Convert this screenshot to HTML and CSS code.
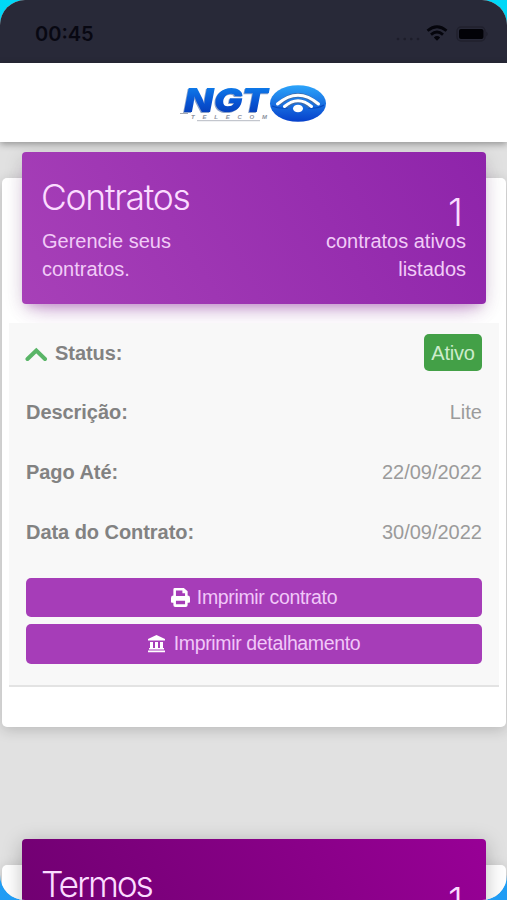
FILE: index.html
```html
<!DOCTYPE html>
<html lang="pt-BR">
<head>
<meta charset="utf-8">
<title>Contratos</title>
<link rel="stylesheet" href="styles.css">
</head>
<body>
<div class="screen">
  <div class="statusbar">
    <span class="time">00:45</span>
    <div class="indicators">
      <svg class="cellular" width="24" height="6" viewBox="0 0 24 6"><g fill="#1d1d2a"><circle cx="2" cy="3" r="1.3"/><circle cx="8.700" cy="3" r="1.3"/><circle cx="15.300" cy="3" r="1.3"/><circle cx="22" cy="3" r="1.3"/></g></svg>
      <svg class="wifi" width="22" height="16" viewBox="0 0 22 16"><g fill="none" stroke="#05050c" stroke-width="2.8"><path d="M1.500 5.800Q11-2.400 20.500 5.800"/><path d="M5 9.600Q11 4.400 17 9.600"/></g><path d="M7.800 12.400Q11 9.600 14.200 12.400L11 15.700Z" fill="#05050c"/></svg>
      <svg class="battery" width="33" height="16" viewBox="0 0 33 16"><rect x="1" y="1" width="28" height="14" rx="4" fill="none" stroke="#20202d" stroke-width="1.4"/><rect x="3" y="3" width="24.500" height="10" rx="2" fill="#020207"/><path d="M30.500 5.500q2 2.500 0 5z" fill="#1b1b27"/></svg>
    </div>
  </div>
  <header class="topbar">
    <svg class="logo" width="150" height="44" viewBox="0 0 150 44">
      <defs>
        <linearGradient id="blue" x1="0" y1="0" x2="0" y2="1"><stop offset="0" stop-color="#128df4"/><stop offset=".55" stop-color="#0754d3"/><stop offset="1" stop-color="#0632ac"/></linearGradient>
        <linearGradient id="disc" x1="0" y1="0" x2="0" y2="1"><stop offset="0" stop-color="#2ca4fa"/><stop offset="1" stop-color="#0640cb"/></linearGradient>
      </defs>
      <text class="logo-name" x="5" y="32" textLength="84" lengthAdjust="spacingAndGlyphs">NGT</text>
      <path d="M1 33.500H9" stroke="#a5a9b2" stroke-width="1"/>
      <text class="logo-sub" x="12" y="39" textLength="76" lengthAdjust="spacing">TELECOM</text>
      <path d="M18 40.700H81" stroke="#b5b9c2" stroke-width="1"/>
      <ellipse cx="119" cy="23.500" rx="28" ry="18.300" fill="url(#disc)"/>
      <path d="M93 26Q100 29 109 28M129 28Q139 29 145 25" stroke="#0749bd" stroke-width="1.200" fill="none"/>
      <g fill="none" stroke="#416ba5" stroke-width="4.200"><path d="M99.500 24Q119 6.500 138.500 24"/><path d="M107 26.800Q119 15.500 131 26.800"/></g>
      <g fill="none" stroke="#fff" stroke-linecap="round" stroke-width="3"><path d="M98.500 24Q119 6.500 139.500 24"/><path d="M105.500 26.500Q119 15 132.500 26.500"/></g>
      <ellipse cx="119" cy="28.500" rx="5" ry="3.800" fill="#fff"/>
    </svg>
  </header>
  <main class="content">
    <section class="card">
      <div class="card-header contracts">
        <h2 class="title">Contratos</h2>
        <div class="summary">
          <p class="description">Gerencie seus<br>contratos.</p>
          <p class="count"><span class="number">1</span><span class="label">contratos ativos</span><span class="label listed">listados</span></p>
        </div>
      </div>
      <div class="details">
        <div class="row"><span class="name"><svg class="chevron" width="24" height="16" viewBox="0 0 24 16"><path d="M2.500 13L11.300 4.500L20 13" fill="none" stroke="#59b567" stroke-width="4" stroke-linecap="round"/></svg><span class="status-label">Status:</span></span><span class="badge">Ativo</span></div>
        <div class="row"><span class="name">Descrição:</span><span class="value">Lite</span></div>
        <div class="row"><span class="name">Pago Até:</span><span class="value">22/09/2022</span></div>
        <div class="row"><span class="name">Data do Contrato:</span><span class="value">30/09/2022</span></div>
        <div class="actions">
          <button class="button"><svg width="19" height="19" viewBox="0 0 20 20"><path fill="#fff" fill-rule="evenodd" d="M4 0H13.500L17.500 3.500V8H17.500Q20 8 20 10.500V14.500Q20 15.500 19 15.500H17.500V18Q17.500 20 15.500 20H4.500Q2.500 20 2.500 18V15.500H1Q0 15.500 0 14.500V10.500Q0 8 2.500 8V1.500Q2.500 0 4 0ZM5.200 2.700V8.500H14.800V5.500H12V2.700ZM5.200 13.500V17.200H14.800V13.500Z"/></svg><span class="contract-text">Imprimir contrato</span></button>
          <button class="button"><svg width="17" height="18" viewBox="0 0 17 18"><path fill="#fff" d="M8.500 0L17 4V5.500H0V4ZM2 7H5V13H2ZM7 7H10V13H7ZM12 7H15V13H12ZM1 13H16V14.500H1ZM0 15.500H17V17.300H0Z"/></svg><span class="detail-text">Imprimir detalhamento</span></button>
        </div>
      </div>
    </section>
    <section class="card terms-card">
      <div class="card-header terms">
        <h2 class="title">Termos</h2>
        <p class="count"><span class="number">1</span></p>
      </div>
    </section>
  </main>
</div>
</body>
</html>
```
FILE: styles.css
```css
* { box-sizing: border-box; }
body { margin: 0; background: linear-gradient(#00d8f7, #209cf4); }
.screen { width: 507px; height: 900px; overflow: hidden; border-radius: 25px; background: #e1e1e1; font-family: "Liberation Sans", Arial, sans-serif; }
.statusbar { height: 63px; padding: 5px 21px 0 35px; display: flex; align-items: center; justify-content: space-between; background: #282938; }
.time { font: 600 20px Inter, sans-serif; color: #080812; }
.indicators { display: flex; align-items: center; }
.cellular { margin: 10px 6px 0 0; }
.wifi { margin: -2px 8px 0 0; }
.battery { margin: -1px -3px 0 0; }
.topbar { position: relative; height: 79px; display: flex; justify-content: center; padding-top: 17px; background: #fff; box-shadow: 0 2px 7px #0000005c; }
.logo-name { font: italic 900 33px Inter, "Liberation Sans", sans-serif; fill: url(#blue); filter: drop-shadow(-1px 1px .5px #8ea3c9); }
.logo-sub { font: italic 700 6px "Liberation Sans", sans-serif; fill: #8d929f; }
.content { padding: 36px 1px 0 2px; }
.card { height: 549px; border-radius: 5px; background: #fff; box-shadow: 0 3px 14px #0000002e; padding: 0 7px; display: flow-root; }
.card-header { height: 152px; margin: -26px 13px 0 13px; border-radius: 4px; padding: 23px 20px 0; color: #f1cbf7; }
.contracts { background: linear-gradient(60deg, #a740b8, #8e24aa); box-shadow: 0 12px 20px -10px #9c27b070, 0 4px 20px #0000001f, 0 7px 8px -5px #9c27b033; }
.title { margin: 0 0 0 -1px; font: 300 35.5px/45px Inter, sans-serif; letter-spacing: -1.3px; color: #fbdcff; }
.summary { display: flex; justify-content: space-between; }
.description { margin: 7px 0 0; font-size: 20px; line-height: 28px; }
.count { margin: -23px 0 0; display: flex; flex-direction: column; align-items: flex-end; font-size: 20px; line-height: 28px; }
.number { margin-right: 3px; font: 300 38px/30px Inter, sans-serif; color: #fbdcff; }
.details { height: 364px; margin: 19px 0 0; padding: 0 17px; background: #f8f8f8; border-bottom: 2px solid #e3e3e3; }
.row { height: 59.6px; display: flex; align-items: center; justify-content: space-between; }
.name { display: flex; align-items: center; padding-top: 1px; font-size: 20px; font-weight: bold; letter-spacing: -.05px; color: #828282; }
.chevron { margin: 1px 6px 0 -1px; }
.value { padding-top: 1px; font-size: 20px; color: #9b9b9b; }
.badge { height: 37px; width: 58px; padding-top: 1px; display: flex; align-items: center; justify-content: center; border-radius: 5px; background: #43a047; font-size: 20px; letter-spacing: -.2px; color: #cdeccc; }
.actions { display: flex; flex-direction: column; gap: 7px; margin-top: 16.6px; }
.button { height: 39.5px; padding: 0 0 1px; display: flex; align-items: center; justify-content: center; gap: 7px; border: 0; border-radius: 5px; background: #a63db8; color: #f1c8f8; font: 19.5px "Liberation Sans", Arial, sans-serif; letter-spacing: -.35px; }
.button svg { margin-top: 1px; }
.detail-text { margin-left: 2px; }
.terms-card { margin-top: 138px; }
.terms { background: linear-gradient(60deg, #6d006e, #980096); box-shadow: 0 4px 20px #00000040; }
.terms .title { letter-spacing: -2.2px; }
.terms .count { margin-top: -21px; }
```
